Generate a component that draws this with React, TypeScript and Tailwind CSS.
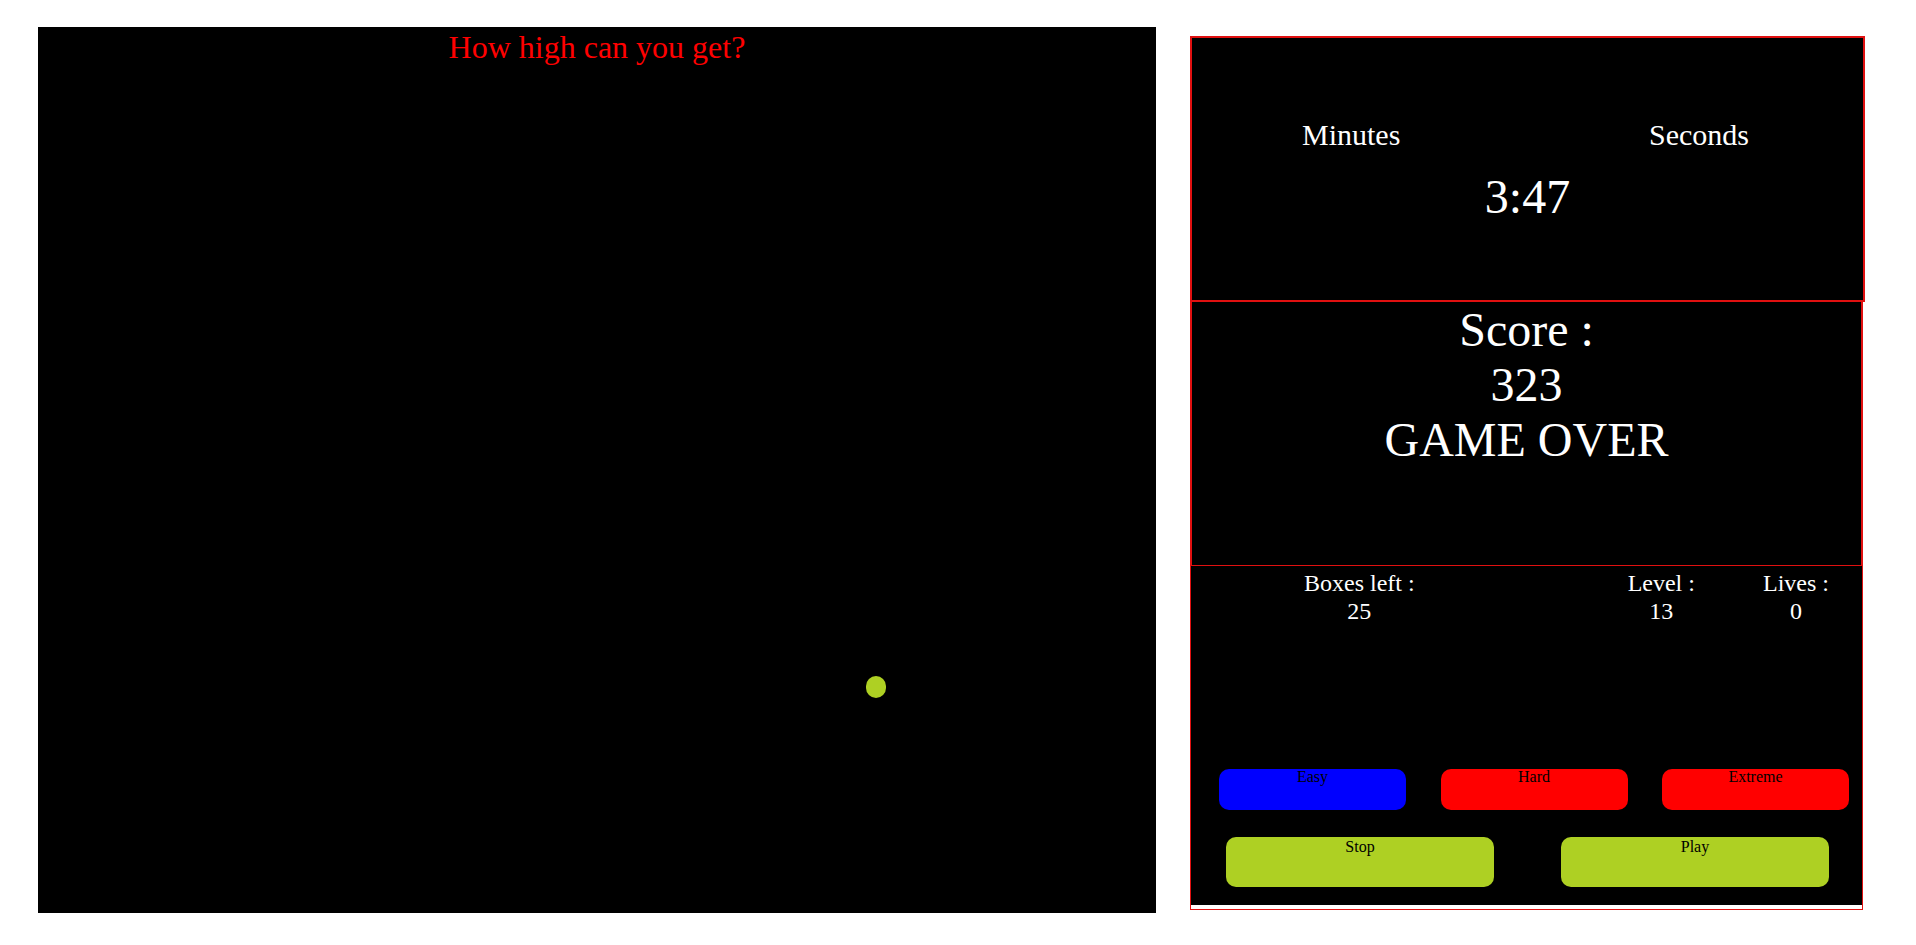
// App.tsx — bouncing ball game screen

const serif = { fontFamily: '"Liberation Serif", "Times New Roman", serif' };

const difficulties = [
  { label: "Easy", color: "bg-[#0000ff]" },
  { label: "Hard", color: "bg-[#ff0000]" },
  { label: "Extreme", color: "bg-[#ff0000]" },
];

export default function App() {
  return (
    <div
      className="w-[1916px] h-[945px] bg-white flex items-start"
      style={serif}
    >
      {/* Game canvas */}
      <div className="ml-[38px] mt-[27px] w-[1118px] h-[886px] bg-black relative pt-[4px]">
        <h1 className="text-center text-[32px] leading-none text-[#ff0000] font-normal">
          How high can you get?
        </h1>
        <div className="absolute left-[828px] top-[649px] w-[20px] h-[22px] rounded-full bg-[#aed023]" />
      </div>

      {/* Side panel */}
      <div className="ml-[34px] mt-[36px] w-[675px] flex flex-col">
        {/* Timer */}
        <div className="h-[266px] border-2 border-[#e01010] bg-black text-white pt-[82px]">
          <div className="flex justify-between pl-[110px] pr-[114px] text-[30px] leading-none">
            <span>Minutes</span>
            <span>Seconds</span>
          </div>
          <div className="mt-[23px] text-center text-[48px] leading-none">3:47</div>
        </div>

        {/* Score */}
        <div className="w-[673px] h-[264px] border-x-2 border-b border-[#e01010] bg-black text-white text-center text-[48px] leading-[55px]">
          <div>Score :</div>
          <div>323</div>
          <div>GAME OVER</div>
        </div>

        {/* Stats and controls */}
        <div className="w-[673px] border-x border-b border-[#e01010] bg-white">
          <div className="h-[339px] bg-black flex flex-col">
            <div className="flex pt-[4px] text-white text-[24px] leading-[27.6px]">
              <div className="ml-[113px] text-center">
                <div>Boxes left :</div>
                <div>25</div>
              </div>
              <div className="ml-[213px] text-center">
                <div>Level :</div>
                <div>13</div>
              </div>
              <div className="ml-[68px] text-center">
                <div>Lives :</div>
                <div>0</div>
              </div>
            </div>

            <div className="mt-[144px] pl-[28px] flex gap-[34.5px]">
              {difficulties.map((d) => (
                <button
                  key={d.label}
                  className={`w-[187px] h-[41px] rounded-[10px] ${d.color} text-black text-[16px] leading-none text-center flex justify-center items-start`}
                  style={serif}
                >
                  {d.label}
                </button>
              ))}
            </div>

            <div className="mt-[27px] pl-[35px] flex gap-[67px]">
              {["Stop", "Play"].map((label) => (
                <button
                  key={label}
                  className="w-[268px] h-[50px] rounded-[10px] bg-[#aed023] text-black text-[16px] leading-none flex justify-center items-start pt-[2px]"
                  style={serif}
                >
                  {label}
                </button>
              ))}
            </div>
          </div>
          <div className="h-[4px]" />
        </div>
      </div>
    </div>
  );
}
